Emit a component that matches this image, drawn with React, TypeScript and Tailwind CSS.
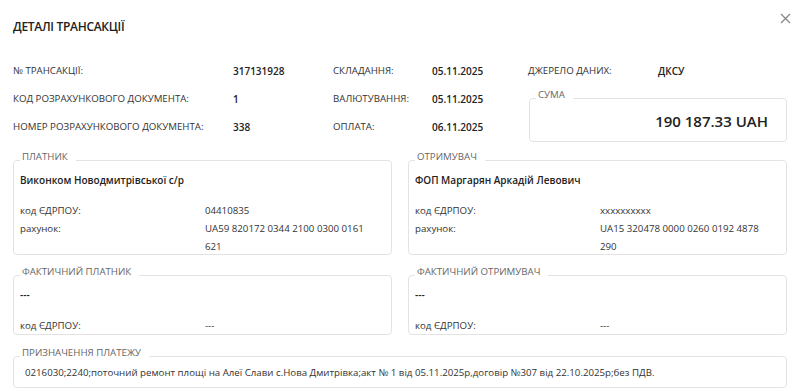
import { ReactNode } from "react";

function Box({
  title,
  className = "",
  children,
}: {
  title: string;
  className?: string;
  children: ReactNode;
}) {
  return (
    <fieldset
      className={
        "border border-[#e3e3e3] rounded-[4px] px-[6px] " + className
      }
    >
      <legend className="pl-[2px] pr-[8px] text-[9.7px] leading-[10px] text-[#666] -translate-y-[3px]">
        {title}
      </legend>
      {children}
    </fieldset>
  );
}

function Party({
  title,
  name,
  code,
  account,
}: {
  title: string;
  name: string;
  code: string;
  account?: string;
}) {
  return (
    <Box title={title} className={account ? "h-[100px]" : "h-[65px]"}>
      <div className="pt-[6px] text-[10px] leading-[18px] font-semibold text-[#222]">
        {name}
      </div>

      <div className="mt-[13px] grid grid-cols-[185px_1fr] text-[9.7px] leading-[18px] text-[#333]">
        <div>код ЄДРПОУ:</div>
        <div>{code}</div>

        {account && (
          <>
            <div>рахунок:</div>
            <div className="pr-[6px]">{account}</div>
          </>
        )}
      </div>
    </Box>
  );
}

export default function App() {
  return (
    <main className="w-[804px] h-[391px] bg-white pl-[13px] pr-[17px] font-['Open_Sans',sans-serif] text-[#333] overflow-hidden">

      {/* HEADER */}

      <div className="flex items-start justify-between pt-[19px]">
        <h1 className="text-[12px] leading-[16px] font-semibold tracking-[-0.3px] text-[#222]">
          ДЕТАЛІ ТРАНСАКЦІЇ
        </h1>

        <button className="mt-[-8px] mr-[-6px] p-[2px] text-[#888]">
          <svg width="11" height="11" viewBox="0 0 11 11">
            <path
              d="M1 1 L10 10 M10 1 L1 10"
              stroke="currentColor"
              strokeWidth="1.3"
            />
          </svg>
        </button>
      </div>

      {/* SUMMARY */}

      <div className="mt-[22px] grid grid-cols-[220px_100px_99px_96px_130px_1fr] grid-rows-[28px_28px_28px] items-center text-[9.7px]">

        <div>№ ТРАНСАКЦІЇ:</div>
        <div className="text-[10px] font-semibold text-[#222]">317131928</div>
        <div>СКЛАДАННЯ:</div>
        <div className="text-[10px] font-semibold text-[#222]">05.11.2025</div>
        <div>ДЖЕРЕЛО ДАНИХ:</div>
        <div className="text-[10px] font-semibold text-[#222]">ДКСУ</div>

        <div>КОД РОЗРАХУНКОВОГО ДОКУМЕНТА:</div>
        <div className="text-[10px] font-semibold text-[#222]">1</div>
        <div>ВАЛЮТУВАННЯ:</div>
        <div className="text-[10px] font-semibold text-[#222]">05.11.2025</div>

        <Box
          title="СУМА"
          className="col-span-2 row-span-2 self-start mt-[8px] h-[49px] ml-[1px] flex"
        >
          <div className="flex-1 text-right pr-[12px] pt-[8px] text-[15px] leading-[20px] font-semibold text-[#222]">
            190 187.33 UAH
          </div>
        </Box>

        <div>НОМЕР РОЗРАХУНКОВОГО ДОКУМЕНТА:</div>
        <div className="text-[10px] font-semibold text-[#222]">338</div>
        <div>ОПЛАТА:</div>
        <div className="text-[10px] font-semibold text-[#222]">06.11.2025</div>
      </div>

      {/* PARTIES */}

      <div className="mt-[14px] grid grid-cols-2 gap-x-[16px] gap-y-[15px]">
        <Party
          title="ПЛАТНИК"
          name="Виконком Новодмитрівської с/р"
          code="04410835"
          account="UA59 820172 0344 2100 0300 0161 621"
        />

        <Party
          title="ОТРИМУВАЧ"
          name="ФОП Маргарян Аркадій Левович"
          code="xxxxxxxxxx"
          account="UA15 320478 0000 0260 0192 4878 290"
        />

        <Party title="ФАКТИЧНИЙ ПЛАТНИК" name="---" code="---" />

        <Party title="ФАКТИЧНИЙ ОТРИМУВАЧ" name="---" code="---" />
      </div>

      {/* PURPOSE */}

      <Box title="ПРИЗНАЧЕННЯ ПЛАТЕЖУ" className="mt-[16px] h-[37px]">
        <div className="pl-[5px] pt-[4px] text-[9.7px] leading-[16px] text-[#333]">
          0216030;2240;поточний ремонт площі на Алеї Слави с.Нова Дмитрівка;акт № 1 від 05.11.2025р,договір №307 від 22.10.2025р;без ПДВ.
        </div>
      </Box>
    </main>
  );
}
